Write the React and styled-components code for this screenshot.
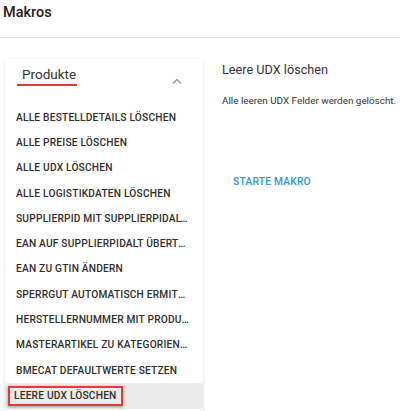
import styled, { createGlobalStyle } from 'styled-components';

const GlobalStyle = createGlobalStyle`
  body {
    margin: 0;
    background: #fff;
    font-family: Roboto, "Liberation Sans", sans-serif;
    color: #333;
  }
`;

const Page = styled.div`
  width: 400px;
  height: 411px;
  overflow: hidden;
`;

const TopBar = styled.div`
  height: 37px;
  padding: 0 3px;
  border-bottom: 1px solid #e6e6e6;
  font-size: 14.5px;
  font-weight: 500;
  color: #222;
  line-height: 25px;
`;

const Body = styled.div`
  display: flex;
  padding: 21px 0 0 5px;
  gap: 19px;
`;

const Card = styled.div`
  width: 198px;
  height: 360px;
  flex-shrink: 0;
  border-radius: 3px;
  box-shadow: 0 1px 3px rgba(0, 0, 0, 0.18);
  overflow: hidden;
`;

const CardHead = styled.div`
  display: flex;
  align-items: flex-start;
  justify-content: space-between;
  height: 46px;
  padding: 7px 20px 0 12px;
  box-sizing: border-box;
`;

const GroupTitle = styled.span`
  font-size: 13.5px;
  color: #333;
  padding: 0 1px 1px 5px;
  border-bottom: 2px solid #e53935;
  line-height: 17px;
`;

const Chevron = styled.svg`
  margin-top: 11px;
`;

const List = styled.div`
  display: flex;
  flex-direction: column;
`;

const Item = styled.div`
  height: 25.3px;
  display: flex;
  align-items: center;
  padding: 0 14px 0 ${p => (p.$marked ? '3px' : '11px')};
  background: ${p => (p.$active ? '#ebebeb' : 'transparent')};
  border-radius: 3px;
  font-size: 10.2px;
  font-weight: 500;
  letter-spacing: 0.2px;
  text-transform: uppercase;
  color: #2e2e2e;
  white-space: nowrap;
  overflow: hidden;
`;

const ItemText = styled.span`
  overflow: hidden;
  text-overflow: ellipsis;
  line-height: 14px;
  padding: ${p => (p.$marked ? '1px 4px' : '3px 0')};
  ${p => p.$marked && `
    border: 2px solid #e53935;
    box-shadow: 0 1px 3px rgba(0,0,0,0.35);
  `}
`;

const Detail = styled.div`
  display: flex;
  flex-direction: column;
  align-items: flex-start;
  padding-top: 2px;
  white-space: nowrap;
`;

const DetailTitle = styled.div`
  font-size: 12.7px;
  color: #333;
  line-height: 17px;
`;

const DetailText = styled.div`
  margin-top: 16px;
  font-size: 9.9px;
  color: #333;
  line-height: 14px;
`;

const ActionButton = styled.button`
  margin-top: 62px;
  padding: 6px 11px;
  border: none;
  background: transparent;
  font-family: inherit;
  font-size: 10.2px;
  font-weight: 500;
  letter-spacing: 0.25px;
  color: #2f95dc;
  text-transform: uppercase;
`;

const makros = [
  'Alle Bestelldetails löschen',
  'Alle Preise löschen',
  'Alle UDX löschen',
  'Alle Logistikdaten löschen',
  'SupplierPID mit SupplierPIDAlt tauschen',
  'EAN auf SupplierPIDAlt übertragen',
  'EAN zu GTIN ändern',
  'Sperrgut automatisch ermitteln',
  'Herstellernummer mit Produktnummer',
  'Masterartikel zu Kategorien zuordnen',
  'BMEcat Defaultwerte setzen',
  'Leere UDX löschen',
];

export default function App() {
  const active = 'Leere UDX löschen';
  return (
    <Page>
      <GlobalStyle />
      <TopBar>Makros</TopBar>
      <Body>
        <Card>
          <CardHead>
            <GroupTitle>Produkte</GroupTitle>
            <Chevron width="12" height="8" viewBox="0 0 12 8">
              <path d="M2 6.5 L6 2.5 L10 6.5" fill="none" stroke="#999" strokeWidth="1.3" />
            </Chevron>
          </CardHead>
          <List>
            {makros.map(m => (
              <Item key={m} $active={m === active} $marked={m === active}>
                <ItemText $marked={m === active}>{m}</ItemText>
              </Item>
            ))}
          </List>
        </Card>
        <Detail>
          <DetailTitle>Leere UDX löschen</DetailTitle>
          <DetailText>Alle leeren UDX Felder werden gelöscht.</DetailText>
          <ActionButton>Starte Makro</ActionButton>
        </Detail>
      </Body>
    </Page>
  );
}
